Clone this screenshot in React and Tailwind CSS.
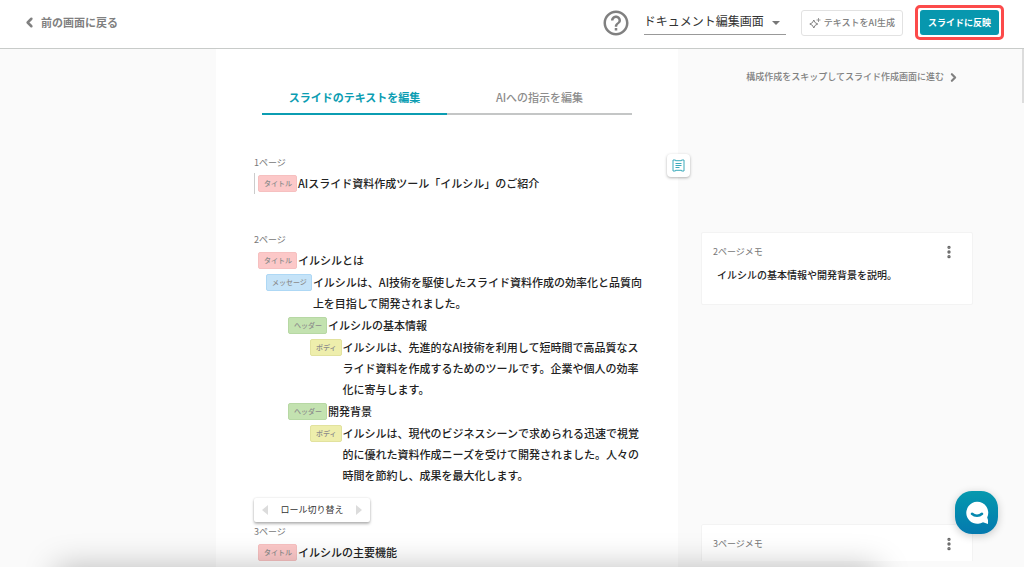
import { useState } from "react"
import { ChevronLeft, ChevronRight, EllipsisVertical } from "lucide-react"

const roleStyles = {
  title: { label: "タイトル", tag: "bg-[#fcc8c8] border-[#f6c0c0]", indent: "pl-[3px]" },
  message: { label: "メッセージ", tag: "bg-[#c5e3f8] border-[#aed8f5]", indent: "pl-[11px]" },
  header: { label: "ヘッダー", tag: "bg-[#c3e2b0] border-[#b7d8a4]", indent: "pl-[33px]" },
  body: { label: "ボディ", tag: "bg-[#eeeeac] border-[#e2e29e]", indent: "pl-[55px]" },
}

const pages = [
  {
    id: 1,
    rows: [{ role: "title", text: "AIスライド資料作成ツール「イルシル」のご紹介", active: true }],
  },
  {
    id: 2,
    rows: [
      { role: "title", text: "イルシルとは" },
      {
        role: "message",
        text: "イルシルは、AI技術を駆使したスライド資料作成の効率化と品質向上を目指して開発されました。",
      },
      { role: "header", text: "イルシルの基本情報" },
      {
        role: "body",
        text: "イルシルは、先進的なAI技術を利用して短時間で高品質なスライド資料を作成するためのツールです。企業や個人の効率化に寄与します。",
      },
      { role: "header", text: "開発背景" },
      {
        role: "body",
        text: "イルシルは、現代のビジネスシーンで求められる迅速で視覚的に優れた資料作成ニーズを受けて開発されました。人々の時間を節約し、成果を最大化します。",
      },
    ],
  },
  { id: 3, rows: [{ role: "title", text: "イルシルの主要機能" }] },
]

function Row({ role, text, active }) {
  const style = roleStyles[role]
  return (
    <div className={`flex items-start border-l ${active ? "border-[#ccc]" : "border-transparent"} ${style.indent}`}>
      <span
        className={`mt-[2px] h-[17px] shrink-0 rounded-[2px] border pr-1 pl-[5px] text-[7px] leading-[15px] font-medium text-[#8b8b8b] ${style.tag}`}
      >
        {style.label}
      </span>
      <p className="ml-px min-w-0 flex-1 text-[11px] leading-[21px] font-medium break-all text-[#222]">{text}</p>
    </div>
  )
}

function Page({ page }) {
  return (
    <section>
      <h2 className="text-[9px] leading-[20px] text-[#777]">{page.id}ページ</h2>
      <div className="flex flex-col gap-px">
        {page.rows.map((row, i) => (
          <Row key={i} {...row} />
        ))}
      </div>
    </section>
  )
}

function RoleSwitcher() {
  return (
    <div className="mt-3 flex h-6 w-[116px] items-center justify-between rounded-[2px] bg-white px-2 shadow-[0_2px_3px_rgba(0,0,0,0.28),0_0_2px_rgba(0,0,0,0.15)]">
      <button aria-label="前のロール">
        <svg viewBox="0 0 6 10" className="h-[10px] w-[6px] fill-[#dcdcdc]">
          <path d="M6 0v10L0 5z" />
        </svg>
      </button>
      <span className="text-[9px] text-[#333]">ロール切り替え</span>
      <button aria-label="次のロール">
        <svg viewBox="0 0 6 10" className="h-[10px] w-[6px] fill-[#dcdcdc]">
          <path d="M0 0v10l6-5z" />
        </svg>
      </button>
    </div>
  )
}

function Memo({ title, text }) {
  return (
    <article className="h-[73px] rounded-[2px] border border-[#f3f3f3] bg-white px-[11px] pt-[9px]">
      <div className="flex items-center justify-between">
        <h3 className="text-[9px] leading-[20px] text-[#777]">{title}</h3>
        <button aria-label="メニュー" className="mr-1 text-[#666]">
          <EllipsisVertical size={16} strokeWidth={3} />
        </button>
      </div>
      {text && <p className="mt-1 pl-1 text-[10px] leading-[18px] font-medium text-[#222]">{text}</p>}
    </article>
  )
}

export default function App() {
  const [tab, setTab] = useState("text")
  const tabClass = (name) =>
    `h-[34px] flex-1 border-b-2 text-[11px] ${
      tab === name ? "border-[#0b9db2] font-bold text-[#0b9db2]" : "border-[#c4c6c6] font-medium text-[#8c8c8c]"
    }`

  return (
    <div className="flex h-screen flex-col overflow-hidden bg-white font-['Noto_Sans_CJK_JP',sans-serif]">
      <header className="flex h-[49px] shrink-0 items-center border-b border-[#c8cbc9] pr-5 pb-[3px] pl-[22px]">
        <button className="flex items-center gap-1 text-[11px] font-bold text-[#808080]">
          <ChevronLeft size={15} strokeWidth={4} />
          前の画面に戻る
        </button>

        <div className="ml-auto flex items-center">
          <button aria-label="ヘルプ">
            <svg viewBox="0 0 24 24" className="size-[30px] fill-[#808080]">
              <path d="M11 18h2v-2h-2v2zm1-16C6.48 2 2 6.48 2 12s4.48 10 10 10 10-4.48 10-10S17.52 2 12 2zm0 18c-4.41 0-8-3.59-8-8s3.59-8 8-8 8 3.59 8 8-3.59 8-8 8zm0-14c-2.21 0-4 1.79-4 4h2c0-1.1.9-2 2-2s2 .9 2 2c0 2-3 1.75-3 5h2c0-2.25 3-2.5 3-5 0-2.21-1.79-4-4-4z" />
            </svg>
          </button>
          <div className="relative ml-[13px] w-[142px]">
            <select
              aria-label="画面の切り替え"
              className="block h-[25px] w-full appearance-none border-b border-[#999] bg-transparent pb-[2px] text-[12px] text-[#333]"
            >
              <option>ドキュメント編集画面</option>
            </select>
            <svg viewBox="0 0 8 4" className="pointer-events-none absolute top-[11px] right-[6px] h-1 w-2 fill-[#777]">
              <path d="M0 0h8L4 4z" />
            </svg>
          </div>
          <button className="ml-[15px] flex h-[26px] items-center gap-[3px] rounded-[3px] border border-[#e2e2e2] px-[7px] text-[9px] font-medium text-[#808080]">
            <svg viewBox="0 0 12 12" className="size-3 fill-none stroke-[#808080]">
              <path d="M4.800 3Q5.500 6.300 8.800 7 5.500 7.700 4.800 11 4.100 7.700.8 7 4.100 6.300 4.800 3z" />
              <path d="M9.500 1v4M7.500 3h4" strokeWidth=".8" />
            </svg>
            テキストをAI生成
          </button>
          <div className="ml-3 rounded-[5px] border-[3px] border-[#fc4a4a] p-[2px]">
            <button className="block h-[25px] rounded-[3px] bg-[#0797ae] px-2 text-[9px] font-bold text-white">
              スライドに反映
            </button>
          </div>
        </div>
      </header>

      <main className="relative grid min-h-0 flex-1 grid-cols-[216fr_462fr_346fr] bg-[#fafafa]">
        <div className="col-start-2 bg-white px-[38px] pt-8">
          <div className="mx-2 flex">
            <button className={tabClass("text")} onClick={() => setTab("text")}>
              スライドのテキストを編集
            </button>
            <button className={tabClass("ai")} onClick={() => setTab("ai")}>
              AIへの指示を編集
            </button>
          </div>
          <div className="-mr-2 pt-[38px]">
            <Page page={pages[0]} />
            <div className="mt-9">
              <Page page={pages[1]} />
            </div>
            <RoleSwitcher />
            <Page page={pages[2]} />
          </div>
        </div>

        <aside className="relative pr-[51px] pl-[23px]">
          <button
            aria-label="メモ"
            className="absolute top-[105px] -left-[11px] grid size-[23px] place-items-center rounded-[4px] bg-white shadow-[0_1px_3px_rgba(0,0,0,0.3)]"
          >
            <svg viewBox="0 0 13 13" className="size-[13px] fill-none stroke-[#3aaabb]">
              <path d="M1 1h2.500v.7h6V1H12v11H9.500v-.7h-6v.7H1zM3.500 4.500h6M3.500 6.500h6M3.500 8.500h4" />
            </svg>
          </button>
          <a
            href="#slides"
            className="mt-[19px] mr-[13px] flex items-center justify-end gap-[3px] text-[9px] leading-[18px] font-medium text-[#808080]"
          >
            構成作成をスキップしてスライド作成画面に進む
            <ChevronRight size={13} strokeWidth={4} />
          </a>
          <div className="mt-[146px]">
            <Memo title="2ページメモ" text="イルシルの基本情報や開発背景を説明。" />
          </div>
          <div className="mt-[219px] h-[37px] overflow-hidden">
            <Memo title="3ページメモ" />
          </div>
        </aside>

        <div className="absolute top-0 right-0 h-[54px] w-[2px] bg-[#dcdcdc]" />
        <div className="pointer-events-none absolute top-full right-[146px] left-[56px] h-10 shadow-[0_0_32px_rgba(0,0,0,0.25)]" />
      </main>

      <button
        aria-label="チャット"
        className="fixed right-[26px] bottom-[33px] grid size-[43px] place-items-center rounded-[17px] bg-linear-to-b from-[#0799ae] to-[#0579ae] shadow-[0_2px_8px_rgba(0,0,0,0.2)]"
      >
        <svg viewBox="0 0 24 24" className="size-6">
          <path d="M12 .8a11 11 0 1 0 6 20.400L23 23v-4l-.8-2.500A11 11 0 0 0 12 .8z" fill="white" />
          <path d="M7 12.800c2.800 2.600 7.200 2.600 10 0" fill="none" stroke="#0588ae" strokeWidth="2.600" strokeLinecap="round" />
        </svg>
      </button>
    </div>
  )
}
